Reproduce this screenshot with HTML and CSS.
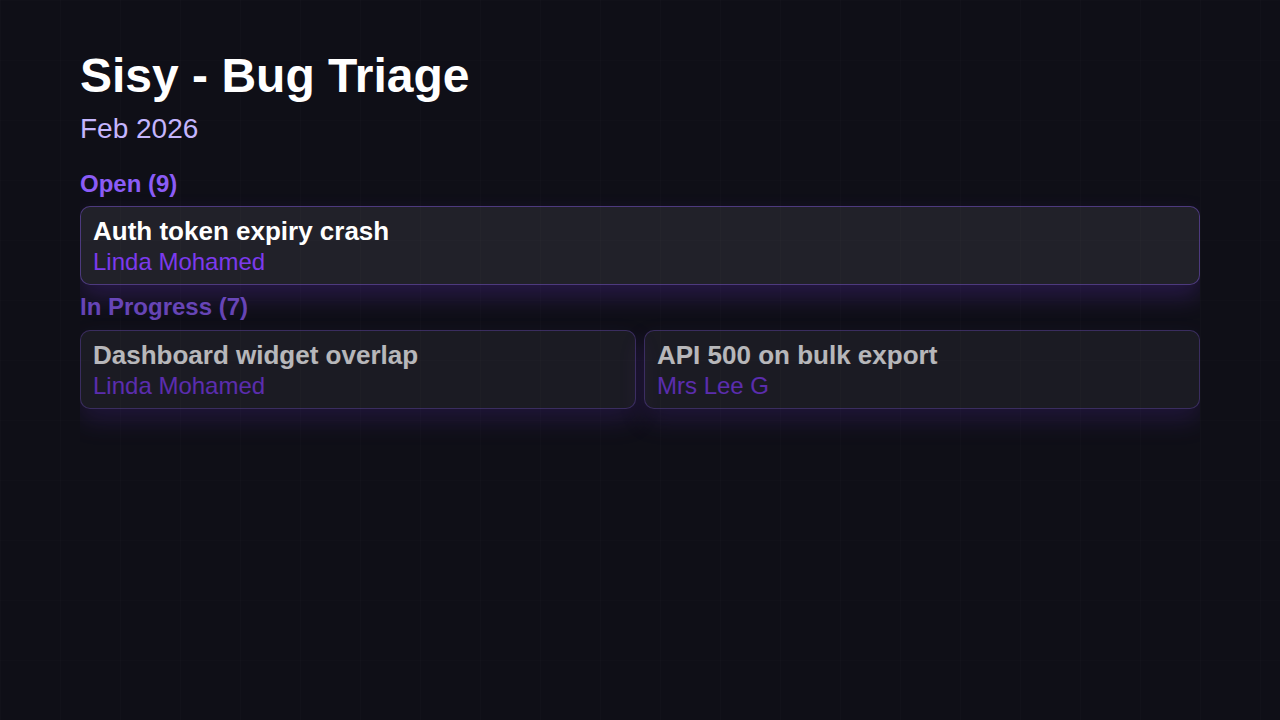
FILE: index.html
```html
<!DOCTYPE html>
<html lang="en">
<head>
<meta charset="utf-8">
<title>Sisy - Bug Triage</title>
<link rel="stylesheet" href="styles.css">
</head>
<body>
<main class="board">
  <h1 class="title">Sisy - Bug Triage</h1>
  <p class="subtitle">Feb 2026</p>

  <section class="lane lane-open">
    <h2 class="lane-head">Open (9)</h2>
    <div class="cards">
      <article class="card">
        <h3 class="card-title">Auth token expiry crash</h3>
        <p class="card-owner">Linda Mohamed</p>
      </article>
    </div>
  </section>

  <section class="lane lane-progress">
    <h2 class="lane-head">In Progress (7)</h2>
    <div class="cards">
      <article class="card">
        <h3 class="card-title">Dashboard widget overlap</h3>
        <p class="card-owner">Linda Mohamed</p>
      </article>
      <article class="card">
        <h3 class="card-title">API 500 on bulk export</h3>
        <p class="card-owner">Mrs Lee G</p>
      </article>
    </div>
  </section>
</main>
</body>
</html>
```

FILE: styles.css
```css
html, body {
  margin: 0;
  padding: 0;
}

body {
  width: 1280px;
  height: 720px;
  background-color: #0f0f17;
  background-image:
    linear-gradient(to right, rgba(255, 255, 255, 0.01) 1px, transparent 1px),
    linear-gradient(to bottom, rgba(255, 255, 255, 0.006) 1px, transparent 1px);
  background-size: 60px 60px;
  font-family: "Liberation Sans", Arial, sans-serif;
  color: #ffffff;
  overflow: hidden;
}

.board {
  margin: 0 80px;
  padding: 48px 0 40px;
  overflow: hidden;
  display: flex;
  flex-direction: column;
}

.title {
  margin: 0;
  font-size: 48px;
  line-height: 56px;
  font-weight: 700;
  color: #ffffff;
}

.subtitle {
  margin: 9px 0 0;
  font-size: 28px;
  line-height: 32px;
  color: #c4b5fd;
}

.lane {
  display: flex;
  flex-direction: column;
  gap: 8px;
}

.lane-open {
  margin-top: 25px;
}

.lane-progress {
  margin-top: 8px;
  opacity: 0.7;
}

.lane-head {
  margin: 0;
  font-size: 24px;
  line-height: 28px;
  font-weight: 700;
  color: #8b5cf6;
}

.lane-progress .lane-head {
  margin-bottom: 1px;
}

.cards {
  display: flex;
  gap: 8px;
}

.card {
  flex: 1 1 0;
  min-width: 0;
  padding: 7px 12px 8px;
  border: 1px solid rgba(139, 92, 246, 0.42);
  border-radius: 10px;
  background: rgba(255, 255, 255, 0.08);
  box-shadow: 0 12px 24px rgba(124, 58, 237, 0.22);
}

.card-title {
  margin: 0;
  font-size: 26px;
  line-height: 34px;
  font-weight: 700;
  color: #ffffff;
}

.card-owner {
  margin: 0;
  font-size: 24px;
  line-height: 28px;
  color: #7c3aed;
}
```
